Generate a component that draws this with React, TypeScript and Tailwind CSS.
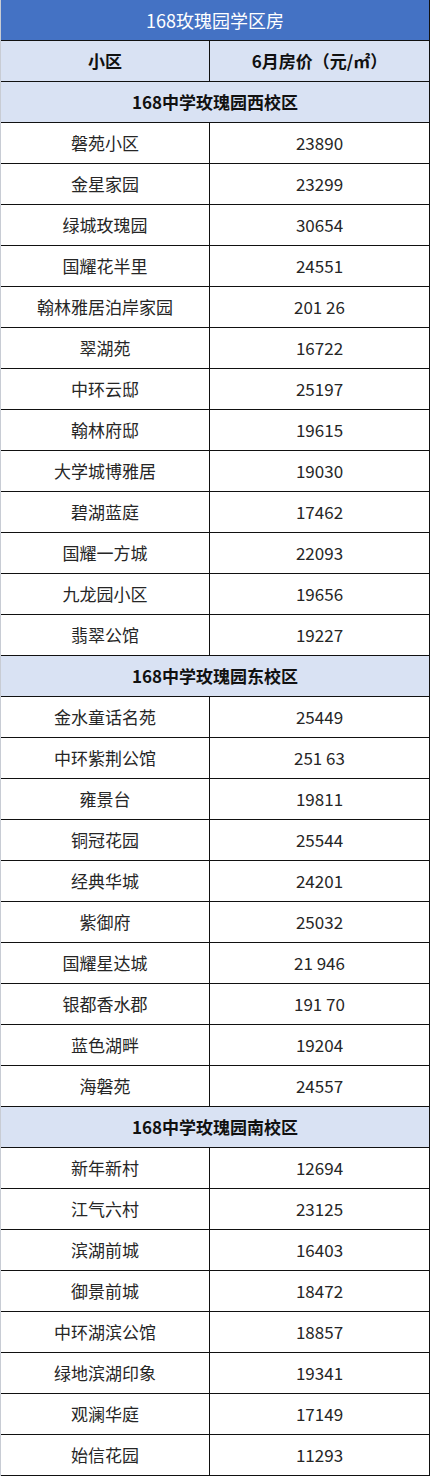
import React from "react";

type Row = [string, string];

const sections: { title: string; rows: Row[] }[] = [
  {
    title: "168中学玫瑰园西校区",
    rows: [
      ["磐苑小区", "23890"],
      ["金星家园", "23299"],
      ["绿城玫瑰园", "30654"],
      ["国耀花半里", "24551"],
      ["翰林雅居泊岸家园", "201 26"],
      ["翠湖苑", "16722"],
      ["中环云邸", "25197"],
      ["翰林府邸", "19615"],
      ["大学城博雅居", "19030"],
      ["碧湖蓝庭", "17462"],
      ["国耀一方城", "22093"],
      ["九龙园小区", "19656"],
      ["翡翠公馆", "19227"],
    ],
  },
  {
    title: "168中学玫瑰园东校区",
    rows: [
      ["金水童话名苑", "25449"],
      ["中环紫荆公馆", "251 63"],
      ["雍景台", "19811"],
      ["铜冠花园", "25544"],
      ["经典华城", "24201"],
      ["紫御府", "25032"],
      ["国耀星达城", "21 946"],
      ["银都香水郡", "191 70"],
      ["蓝色湖畔", "19204"],
      ["海磐苑", "24557"],
    ],
  },
  {
    title: "168中学玫瑰园南校区",
    rows: [
      ["新年新村", "12694"],
      ["江气六村", "23125"],
      ["滨湖前城", "16403"],
      ["御景前城", "18472"],
      ["中环湖滨公馆", "18857"],
      ["绿地滨湖印象", "19341"],
      ["观澜华庭", "17149"],
      ["始信花园", "11293"],
    ],
  },
];

const font = "font-['Noto_Sans_CJK_SC','Noto_Sans',sans-serif]";

export default function App() {
  return (
    <div className={`w-[430px] h-[1477px] bg-white ${font}`}>
      <div className="w-[430px] border-l border-l-[#c8ccd4] border-r border-r-[#111]">
        <div className="h-[41px] bg-[#4472c4] border-b border-[#111] flex items-center justify-center text-white text-[18px]">
          168玫瑰园学区房
        </div>
        <div className="grid grid-cols-[209px_1fr] h-[41px] bg-[#d9e2f3] border-b border-[#111] text-[17px] font-bold text-[#111]">
          <div className="flex items-center justify-center border-r border-[#111]">小区</div>
          <div className="flex items-center justify-center">6月房价（元/㎡）</div>
        </div>
        {sections.map((s) => (
          <div key={s.title}>
            <div className="h-[41px] bg-[#d9e2f3] border-b border-[#111] flex items-center justify-center text-[17px] font-bold text-[#111]">
              {s.title}
            </div>
            {s.rows.map(([name, price]) => (
              <div
                key={name}
                className="grid grid-cols-[209px_1fr] h-[41px] border-b border-[#111] text-[17px] text-[#262626]"
              >
                <div className="flex items-center justify-center border-r border-[#111]">{name}</div>
                <div className="flex items-center justify-center">{price}</div>
              </div>
            ))}
          </div>
        ))}
      </div>
    </div>
  );
}
